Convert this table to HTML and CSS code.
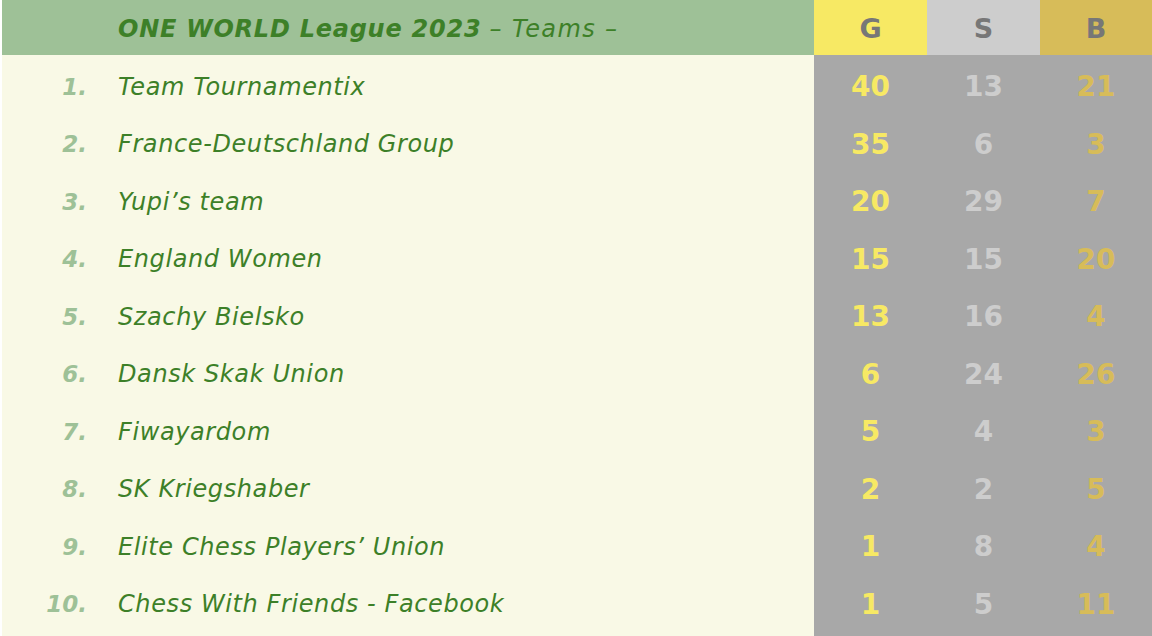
FILE: index.html
```html
<!DOCTYPE html>
<html>
<head>
<meta charset="utf-8">
<link rel="stylesheet" href="styles.css">
</head>
<body>
<div class="board">
  <div class="row head">
    <div class="rank"></div>
    <div class="name"><span><b>ONE WORLD League 2023</b> <span class="sub">– Teams –</span></span></div>
    <div class="med g">G</div>
    <div class="med s">S</div>
    <div class="med b">B</div>
  </div>
  <div class="row"><div class="rank">1.</div><div class="name">Team Tournamentix</div><div class="num g">40</div><div class="num s">13</div><div class="num b">21</div></div>
  <div class="row"><div class="rank">2.</div><div class="name">France-Deutschland Group</div><div class="num g">35</div><div class="num s">6</div><div class="num b">3</div></div>
  <div class="row"><div class="rank">3.</div><div class="name">Yupi’s team</div><div class="num g">20</div><div class="num s">29</div><div class="num b">7</div></div>
  <div class="row"><div class="rank">4.</div><div class="name">England Women</div><div class="num g">15</div><div class="num s">15</div><div class="num b">20</div></div>
  <div class="row"><div class="rank">5.</div><div class="name">Szachy Bielsko</div><div class="num g">13</div><div class="num s">16</div><div class="num b">4</div></div>
  <div class="row"><div class="rank">6.</div><div class="name">Dansk Skak Union</div><div class="num g">6</div><div class="num s">24</div><div class="num b">26</div></div>
  <div class="row"><div class="rank">7.</div><div class="name">Fiwayardom</div><div class="num g">5</div><div class="num s">4</div><div class="num b">3</div></div>
  <div class="row"><div class="rank">8.</div><div class="name">SK Kriegshaber</div><div class="num g">2</div><div class="num s">2</div><div class="num b">5</div></div>
  <div class="row"><div class="rank">9.</div><div class="name">Elite Chess Players’ Union</div><div class="num g">1</div><div class="num s">8</div><div class="num b">4</div></div>
  <div class="row"><div class="rank">10.</div><div class="name">Chess With Friends - Facebook</div><div class="num g">1</div><div class="num s">5</div><div class="num b">11</div></div>
  <div class="row filler"><div class="rank"></div><div class="name"></div><div class="num"></div><div class="num"></div><div class="num"></div></div>
</div>
</body>
</html>
```
FILE: styles.css
```css
html, body {
  margin: 0;
  padding: 0;
  background: #ffffff;
  overflow: hidden;
}
body {
  padding-left: 2px;
  font-family: "DejaVu Sans", Verdana, sans-serif;
}
.board {
  display: flex;
  flex-direction: column;
  height: 636px;
}
.row {
  display: grid;
  grid-template-columns: 85px 727px 113px 113px 112px;
  height: 57.5px;
  align-items: center;
  background: #f9f9e6;
}
.row > div {
  height: 100%;
  display: flex;
  align-items: center;
  padding-top: 6px;
  box-sizing: border-box;
}
.row.head {
  height: 55px;
  background: #9ec197;
}
.row.head > div { padding-top: 2px; }
.row.filler { flex: 1; }
.rank {
  justify-content: flex-end;
  color: #9ec197;
  font-weight: bold;
  font-style: italic;
  font-size: 23px;
}
.name {
  padding-left: 31px;
  color: #3d8028;
  font-style: italic;
  font-size: 24px;
  letter-spacing: 0.6px;
  white-space: nowrap;
}
.head .name b { font-weight: bold; letter-spacing: 0.75px; }
.head .name .sub { letter-spacing: 1.4px; }
.med {
  justify-content: center;
  color: #777777;
  font-weight: bold;
  font-size: 27px;
}
.med.g { background: #f7e964; }
.med.s { background: #cdcdcd; }
.med.b { background: #d7bc59; }
.num {
  justify-content: center;
  background: #a8a8a8;
  font-weight: bold;
  font-size: 28px;
}
.num.g { color: #f7e964; }
.num.s { color: #cdcdcd; }
.num.b { color: #d7bc59; }
```
